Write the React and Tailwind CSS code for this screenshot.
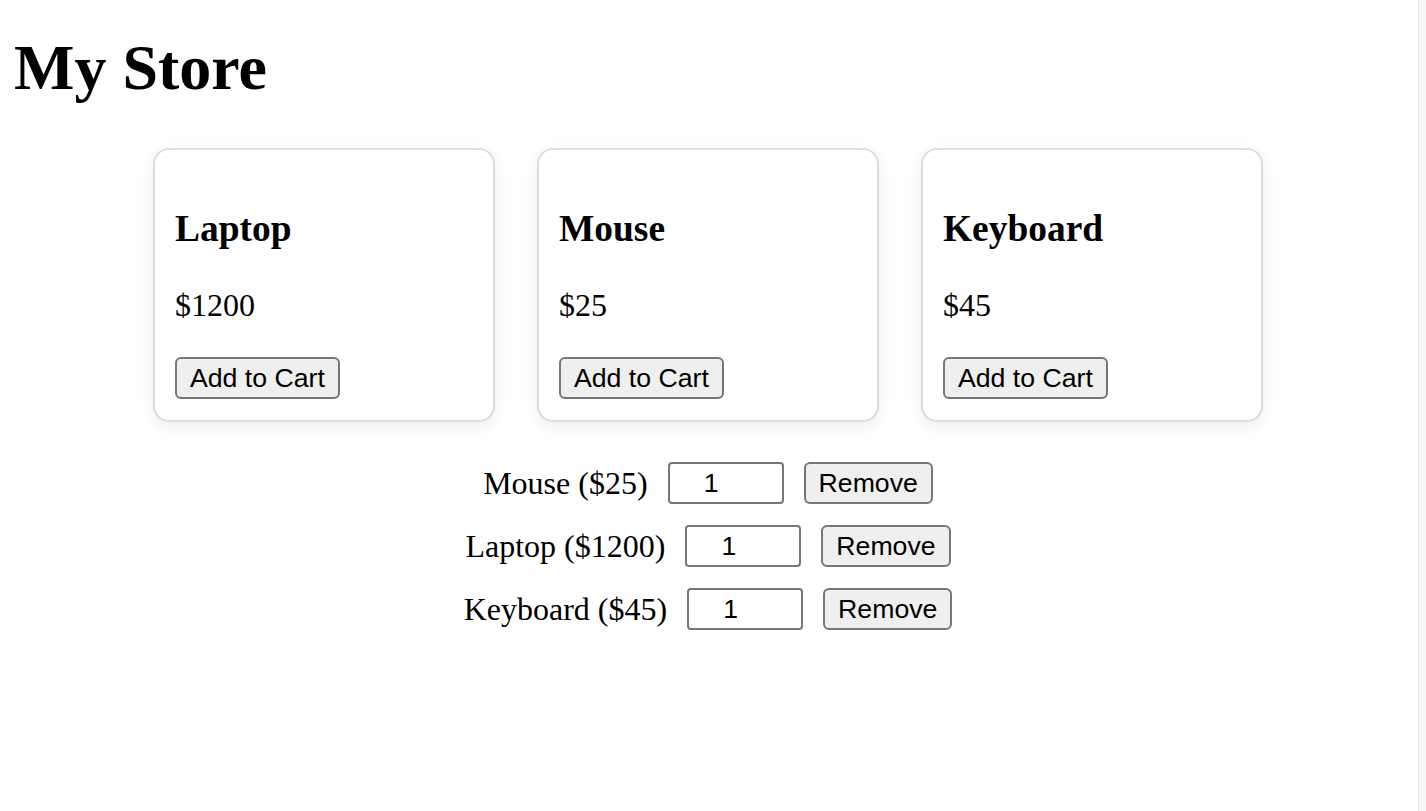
import React, { useState } from 'react';

const products = [
  { id: 1, name: 'Laptop', price: 1200 },
  { id: 2, name: 'Mouse', price: 25 },
  { id: 3, name: 'Keyboard', price: 45 },
];

const serif = "font-['Liberation_Serif','Times_New_Roman',serif]";
const sans = "font-['Liberation_Sans',Arial,sans-serif]";

const ProductCard = ({ product, onAdd }) => {
  return (
    <div className="w-[342px] rounded-[16px] border-2 border-[#ddd] bg-white px-[20px] pt-[20px] pb-[21px] shadow-[0_4px_16px_rgba(0,0,0,0.08)]">
      <h3 className="mt-[38px] text-[37.44px] font-bold leading-[42px] text-black">
        {product.name}
      </h3>
      <p className="mt-[37px] text-[32px] leading-[36px] text-black">${product.price}</p>
      <button
        onClick={() => onAdd(product)}
        className={`${sans} mt-[34px] flex h-[42px] items-center rounded-[6px] border-2 border-[#767676] bg-[#efefef] px-[13px] text-[26.67px] leading-none text-black`}
      >
        Add to Cart
      </button>
    </div>
  );
};

const CartRow = ({ item, onRemove, onQty }) => {
  return (
    <div className="flex items-center justify-center gap-[20px]">
      <span className="text-[32px] leading-[36px] text-black">
        {item.name} (${item.price})
      </span>
      <input
        type="text"
        value={item.qty}
        onChange={(e) => onQty(item.id, e.target.value)}
        className={`${sans} h-[42px] w-[116px] rounded-[4px] border-2 border-[#767676] bg-white pl-[4px] pr-[33px] text-center text-[26.67px] text-black outline-none`}
      />
      <button
        onClick={() => onRemove(item.id)}
        className={`${sans} flex h-[42px] items-center rounded-[6px] border-2 border-[#767676] bg-[#efefef] px-[13px] text-[26.67px] leading-none text-black`}
      >
        Remove
      </button>
    </div>
  );
};

export default function App() {
  const [cart, setCart] = useState([
    { id: 2, name: 'Mouse', price: 25, qty: 1 },
    { id: 1, name: 'Laptop', price: 1200, qty: 1 },
    { id: 3, name: 'Keyboard', price: 45, qty: 1 },
  ]);

  const handleAdd = (product) => {
    const found = cart.find((c) => c.id === product.id);
    if (found) {
      setCart(cart.map((c) => (c.id === product.id ? { ...c, qty: c.qty + 1 } : c)));
    } else {
      setCart([...cart, { ...product, qty: 1 }]);
    }
  };

  const handleRemove = (id) => setCart(cart.filter((c) => c.id !== id));

  const handleQty = (id, qty) =>
    setCart(cart.map((c) => (c.id === id ? { ...c, qty } : c)));

  return (
    <div className={`${serif} flex h-[811px] w-full bg-white`}>
      <div className="flex-1 pl-[16px] pr-[18px]">
        <h1 className="-ml-[2px] mt-[31px] text-[64px] font-bold leading-[74px] text-black">
          My Store
        </h1>

        <div className="mt-[43px] flex justify-center gap-[42px]">
          {products.map((p) => (
            <ProductCard key={p.id} product={p} onAdd={handleAdd} />
          ))}
        </div>

        <div className="mt-[40px] flex flex-col gap-[21px]">
          {cart.map((item) => (
            <CartRow key={item.id} item={item} onRemove={handleRemove} onQty={handleQty} />
          ))}
        </div>
      </div>
      <div className="w-[8px] border-l border-[#e5e5e5] bg-[#f7f7f7]" />
    </div>
  );
}
